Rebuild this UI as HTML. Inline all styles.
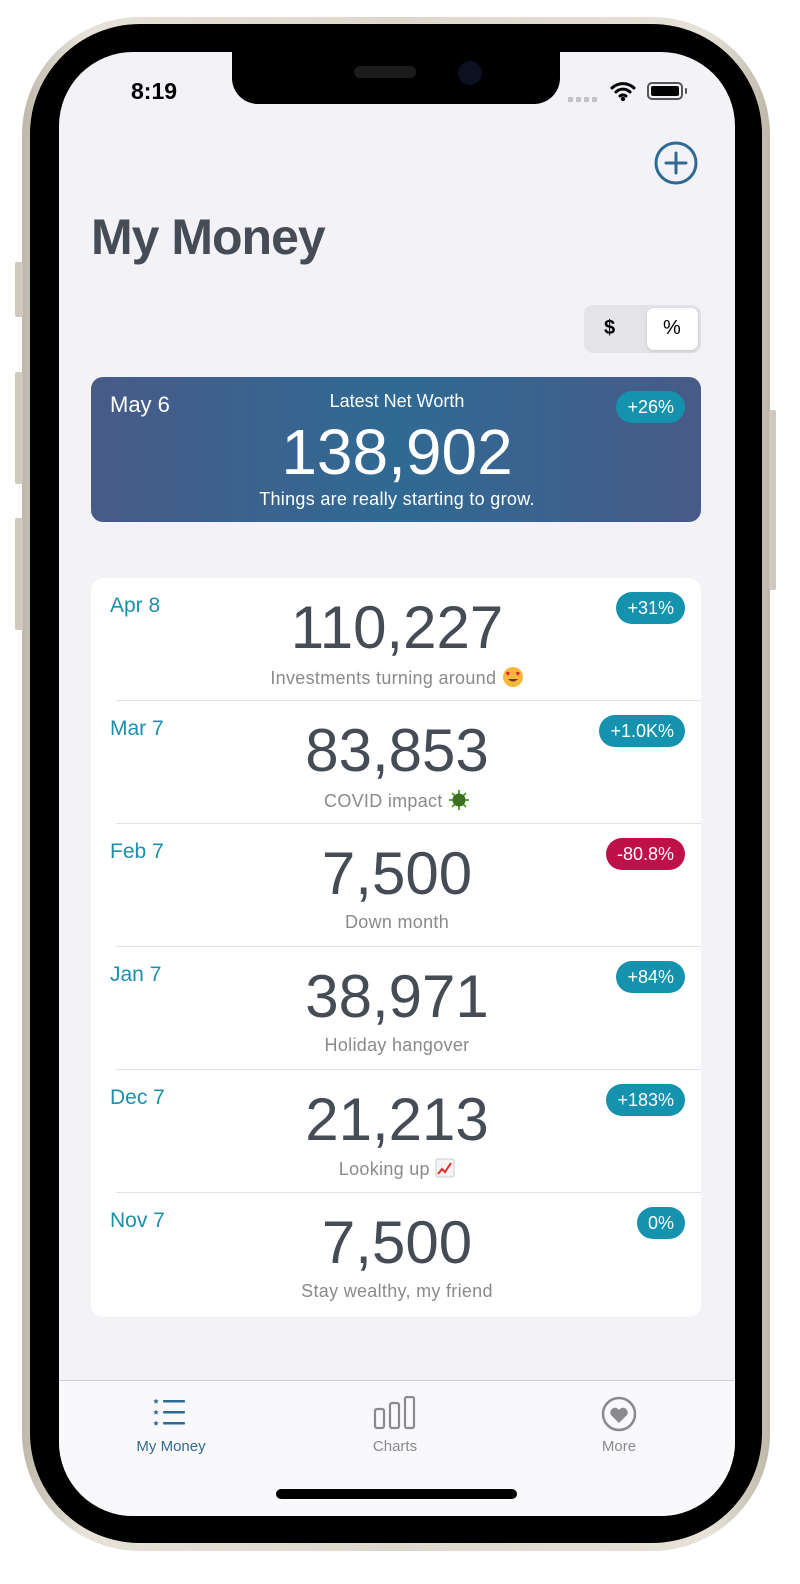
<!DOCTYPE html>
<html><head><meta charset="utf-8"><style>
*{margin:0;padding:0;box-sizing:border-box}
html,body{width:800px;height:1584px;background:#fff;overflow:hidden;font-family:"Liberation Sans",sans-serif}
.frame{position:absolute;left:22px;top:17px;width:748px;height:1534px;border-radius:118px;background:linear-gradient(90deg,#bdb8aa,#e6e2d7 8%,#dcd8cc 50%,#e6e2d7 92%,#bdb8aa)}
.bezel{position:absolute;border-radius:110px;background:#000}
.btn{position:absolute;background:#cfcabd;border-radius:2px}
.screen{position:absolute;left:59px;top:52px;width:676px;height:1464px;border-radius:74px;background:#f2f2f7;overflow:hidden}
.notch{position:absolute;left:173px;top:0;width:328px;height:52px;background:#000;border-radius:0 0 26px 26px}
.abs{position:absolute}
.title{left:32px;top:156px;font-size:50px;font-weight:bold;color:#454c55;letter-spacing:-1px}
.seg{left:525px;top:253px;width:117px;height:48px;background:#e3e3e8;border-radius:9px}
.seg .on{position:absolute;left:63px;top:3px;width:51px;height:42px;background:#fff;border-radius:7px;box-shadow:0 1px 3px rgba(0,0,0,.15)}
.hero{left:32px;top:325px;width:610px;height:145px;border-radius:12px;background:linear-gradient(90deg,#485a88,#2f6a93 50%,#485a88);color:#fff}
.badge{position:absolute;height:32px;border-radius:16px;background:#1592ae;color:#fff;font-size:18px;line-height:32px;padding:0 11px;right:16px}
.card{left:32px;top:526px;width:610px;height:739px;border-radius:12px;background:#fff}
.row{position:absolute;left:0;width:610px;height:123px}
.row .sep{position:absolute;left:25px;right:0;bottom:0;height:1px;background:#e2e2e6}
.date{position:absolute;left:19px;top:16px;font-size:21px;color:#1a90ad}
.num{position:absolute;left:0;width:612px;text-align:center;top:15px;font-size:60px;color:#454c55}
.sub{position:absolute;left:0;width:612px;text-align:center;top:88px;font-size:18px;color:#8a8a8e;letter-spacing:.3px}
.tab{left:0;top:1328px;width:676px;height:136px;background:#f9f9fb;border-top:1px solid #cfcfd4}
.tl{position:absolute;top:57px;font-size:15px;width:120px;text-align:center}
</style></head><body>
<div class="frame"></div>
<div class="btn" style="left:15px;top:262px;width:8px;height:55px"></div>
<div class="btn" style="left:15px;top:372px;width:8px;height:112px"></div>
<div class="btn" style="left:15px;top:518px;width:8px;height:112px"></div>
<div class="btn" style="left:769px;top:410px;width:7px;height:180px"></div>
<div class="bezel" style="left:30px;top:24px;width:732px;height:1519px"></div>
<div class="screen">
  <div class="notch">
    <div class="abs" style="left:122px;top:14px;width:62px;height:12px;border-radius:6px;background:#1c1c1e"></div>
    <div class="abs" style="left:226px;top:9px;width:24px;height:24px;border-radius:12px;background:#0d1020"></div>
  </div>
  <div class="abs" style="left:72px;top:26px;font-size:23px;font-weight:bold;color:#000">8:19</div>
  <div class="abs" style="left:509px;top:45px;width:32px;height:5px;background:repeating-linear-gradient(90deg,#c4c4c8 0 5px,transparent 5px 8px)"></div>
  <svg class="abs" style="left:551px;top:28px" width="26" height="22" viewBox="0 0 26 22"><path d="M2 8a16 16 0 0 1 22 0M6 12a10 10 0 0 1 14 0M10 16a4.5 4.5 0 0 1 6 0" stroke="#000" stroke-width="3" fill="none" stroke-linecap="round"/><circle cx="13" cy="19" r="2.2"/></svg>
  <div class="abs" style="left:588px;top:30px;width:36px;height:18px;border:2px solid #555;border-radius:5px;padding:2px"><div style="background:#000;height:100%;border-radius:2px"></div></div>
  <div class="abs" style="left:626px;top:36px;width:2px;height:6px;background:#555;border-radius:1px"></div>
  <svg class="abs" style="left:595px;top:89px" width="44" height="44" viewBox="0 0 44 44"><circle cx="22" cy="22" r="20" fill="none" stroke="#2e6a92" stroke-width="3"/><path d="M22 12v20M12 22h20" stroke="#2e6a92" stroke-width="3" stroke-linecap="round"/></svg>
  <div class="abs title">My Money</div>
  <div class="abs seg"><div class="on"></div>
    <div class="abs" style="left:20px;top:12px;font-size:20px;font-weight:bold">$</div>
    <div class="abs" style="left:79px;top:12px;font-size:20px">%</div></div>
  <div class="abs hero">
    <div class="abs" style="left:19px;top:15px;font-size:22px">May 6</div>
    <div class="abs" style="left:0;width:612px;text-align:center;top:14px;font-size:18px">Latest Net Worth</div>
    <div class="badge" style="top:14px">+26%</div>
    <div class="abs" style="left:0;width:612px;text-align:center;top:38px;font-size:64px">138,902</div>
    <div class="abs" style="left:0;width:612px;text-align:center;top:112px;font-size:18px;letter-spacing:.3px">Things are really starting to grow.</div>
  </div>
  <div class="abs card">
    <div class="row" style="top:0"><div class="date">Apr 8</div><div class="badge" style="top:14px">+31%</div><div class="num">110,227</div><div class="sub">Investments turning around <svg width="22" height="22" viewBox="0 0 22 22" style="vertical-align:-4px"><circle cx="11" cy="11" r="10" fill="#f6b73c"/><path d="M5 6.5c1-1.5 3-.5 2.5 1L6 10 4.2 7.8C3.5 6.3 5 5.4 5 6.5zM15 6.5c1-1.5 3-.5 2.5 1L16 10l-1.8-2.2c-.7-1.5.8-2.4.8-1.3z" fill="#e1252f"/><path d="M6 13q5 5 10 0z" fill="#6b3a1e"/></svg></div><div class="sep"></div></div>
    <div class="row" style="top:123px"><div class="date">Mar 7</div><div class="badge" style="top:14px">+1.0K%</div><div class="num">83,853</div><div class="sub">COVID impact <svg width="22" height="22" viewBox="0 0 22 22" style="vertical-align:-4px"><g stroke="#5fa83a" stroke-width="2"><path d="M11 1v20M1 11h20M4 4l14 14M18 4L4 18"/></g><circle cx="11" cy="11" r="6.5" fill="#3b7020"/></svg></div><div class="sep"></div></div>
    <div class="row" style="top:246px"><div class="date">Feb 7</div><div class="badge" style="top:14px;background:#c0104a">-80.8%</div><div class="num">7,500</div><div class="sub">Down month</div><div class="sep"></div></div>
    <div class="row" style="top:369px"><div class="date">Jan 7</div><div class="badge" style="top:14px">+84%</div><div class="num">38,971</div><div class="sub">Holiday hangover</div><div class="sep"></div></div>
    <div class="row" style="top:492px"><div class="date">Dec 7</div><div class="badge" style="top:14px">+183%</div><div class="num">21,213</div><div class="sub">Looking up <svg width="20" height="20" viewBox="0 0 20 20" style="vertical-align:-3px"><rect x="1" y="1" width="18" height="18" rx="2" fill="#f4f4f4" stroke="#ccc"/><path d="M3 16l4-5 3 3 6-9" stroke="#e0312f" stroke-width="2" fill="none"/></svg></div><div class="sep"></div></div>
    <div class="row" style="top:615px"><div class="date">Nov 7</div><div class="badge" style="top:14px">0%</div><div class="num">7,500</div><div class="sub">Stay wealthy, my friend</div></div>
  </div>
  <div class="abs tab">
    <svg class="abs" style="left:93px;top:16px" width="36" height="30" viewBox="0 0 36 30"><g fill="#2e6a92"><rect x="11" y="3" width="22" height="2.5" rx="1"/><rect x="11" y="14" width="22" height="2.5" rx="1"/><rect x="11" y="25" width="22" height="2.5" rx="1"/><path d="M4 1.5l.8 1.8 1.9.2-1.4 1.2.4 1.9L4 5.6 2.3 6.6l.4-1.9L1.3 3.5l1.9-.2zM4 12.5l.8 1.8 1.9.2-1.4 1.2.4 1.9L4 16.6 2.3 17.6l.4-1.9-1.4-1.2 1.9-.2zM4 23.5l.8 1.8 1.9.2-1.4 1.2.4 1.9L4 27.6 2.3 28.6l.4-1.9-1.4-1.2 1.9-.2z"/></g></svg>
    <div class="tl" style="left:52px;color:#2e6a92">My Money</div>
    <svg class="abs" style="left:314px;top:15px" width="44" height="34" viewBox="0 0 44 34"><g fill="none" stroke="#8a8a8e" stroke-width="2.2"><rect x="2" y="13" width="9" height="19" rx="2"/><rect x="17" y="7" width="9" height="25" rx="2"/><rect x="32" y="1" width="9" height="31" rx="2"/></g></svg>
    <div class="tl" style="left:276px;color:#8a8a8e">Charts</div>
    <svg class="abs" style="left:542px;top:15px" width="36" height="36" viewBox="0 0 36 36"><circle cx="18" cy="18" r="16" fill="none" stroke="#8a8a8e" stroke-width="2.5"/><path d="M18 27l-8-8a4.5 4.5 0 0 1 8-5 4.5 4.5 0 0 1 8 5z" fill="#8a8a8e"/></svg>
    <div class="tl" style="left:500px;color:#8a8a8e">More</div>
    <div class="abs" style="left:217px;top:108px;width:241px;height:10px;border-radius:5px;background:#000"></div>
  </div>
</div>
</body></html>
